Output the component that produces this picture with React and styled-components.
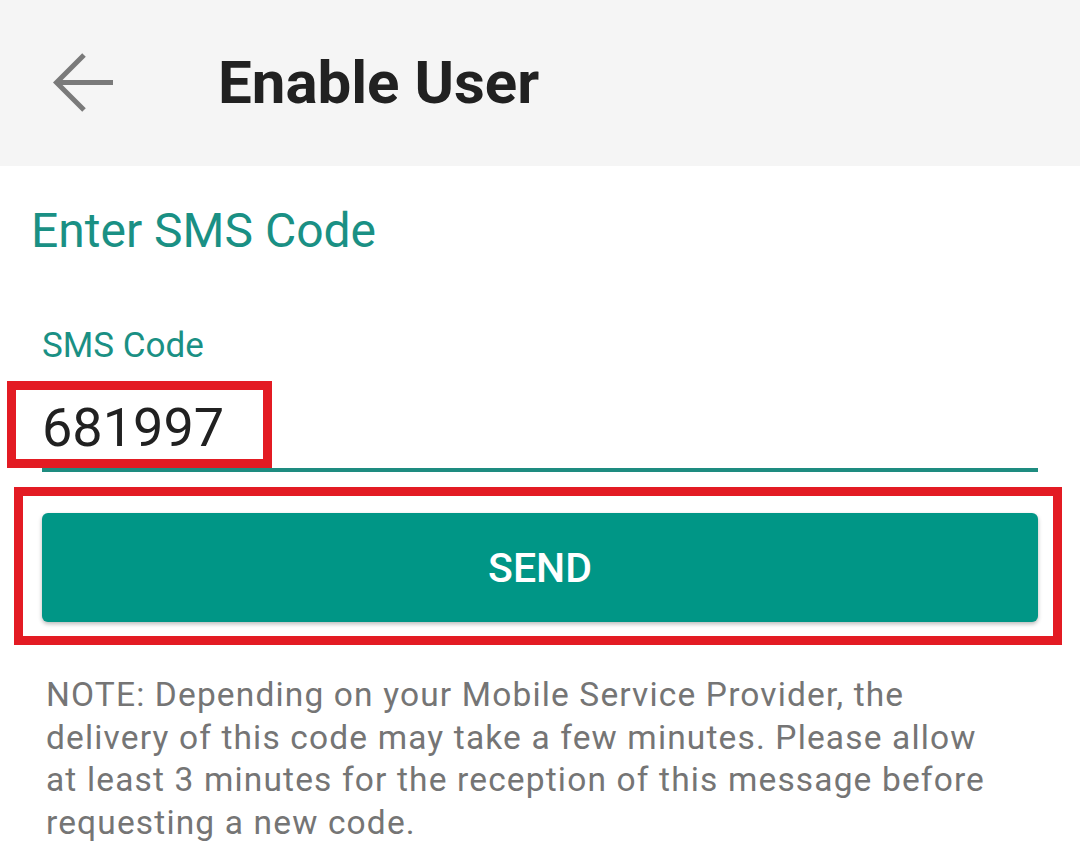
import React from "react";
import styled, { createGlobalStyle } from "styled-components";

const GlobalStyle = createGlobalStyle`
	html, body {
		margin: 0;
		padding: 0;
		background: #ffffff;
	}
	body {
		font-family: Roboto, "Noto Sans", Arial, sans-serif;
	}
`;

function BackArrow() {
	return (
		<svg width="62" height="60" viewBox="0 0 62 60" fill="none">
			<path
				d="M4 29.5H60M31 2L3.5 29.5L31 57"
				stroke="#7a7a7a"
				strokeWidth="5"
				strokeLinecap="butt"
				strokeLinejoin="miter"
			/>
		</svg>
	);
}

function App() {
	return (
		<StyledPage>
			<GlobalStyle />
			<Header>
				<BackButton aria-label="Back">
					<BackArrow />
				</BackButton>
				<Title>Enable User</Title>
			</Header>

			<Content>
				<Heading>Enter SMS Code</Heading>

				<Field>
					<FieldLabel>SMS Code</FieldLabel>
					<InputRow>
						<InputValue>681997</InputValue>
						<Highlight $top={-20} $left={-35} $bottom={0} $width={265} />
					</InputRow>
				</Field>

				<ButtonWrap>
					<SendButton>SEND</SendButton>
					<Highlight $top={-26} $left={-28} $bottom={-23} $right={-24} />
				</ButtonWrap>

				<Note>
					NOTE: Depending on your Mobile Service Provider, the delivery of
					this code may take a few minutes. Please allow at least 3 minutes
					for the reception of this message before requesting a new code.
				</Note>
			</Content>
		</StyledPage>
	);
}

const StyledPage = styled.div`
	width: 1080px;
	height: 864px;
	overflow: hidden;
	background: #ffffff;
`;

const Header = styled.header`
	height: 166px;
	display: flex;
	align-items: center;
	background-color: #f5f5f5;
`;

const BackButton = styled.button`
	display: flex;
	align-items: center;
	justify-content: center;
	margin-left: 53px;
	padding: 0;
	border: none;
	background: none;
	cursor: pointer;
`;

const Title = styled.h1`
	margin: 0 0 0 103px;
	font-size: 60px;
	line-height: 60px;
	font-weight: 700;
	color: #212121;
`;

const Content = styled.main`
	display: flex;
	flex-direction: column;
	padding: 0 42px;
`;

const Heading = styled.h2`
	margin: 40px 0 0 -11px;
	font-size: 48px;
	line-height: 50px;
	font-weight: 400;
	color: #1a9084;
`;

const Field = styled.div`
	display: flex;
	flex-direction: column;
	margin-top: 72px;
`;

const FieldLabel = styled.label`
	font-size: 35px;
	line-height: 35px;
	color: #1a9084;
`;

const InputRow = styled.div`
	position: relative;
	margin-top: 38px;
	padding-bottom: 13px;
	border-bottom: 4px solid #1e8c80;
`;

const InputValue = styled.div`
	font-size: 54px;
	line-height: 54px;
	color: #212121;
`;

const Highlight = styled.div`
	position: absolute;
	top: ${(p) => p.$top}px;
	left: ${(p) => p.$left}px;
	bottom: ${(p) => p.$bottom}px;
	${(p) => (p.$width ? `width: ${p.$width}px;` : "")}
	${(p) => (p.$right !== undefined ? `right: ${p.$right}px;` : "")}
	box-sizing: border-box;
	border: 9px solid #e31b23;
	pointer-events: none;
`;

const ButtonWrap = styled.div`
	position: relative;
	margin-top: 41px;
`;

const SendButton = styled.button`
	display: flex;
	align-items: center;
	justify-content: center;
	width: 100%;
	height: 109px;
	border: none;
	border-radius: 6px;
	background-color: #009686;
	box-shadow: 0 2px 4px rgba(0, 0, 0, 0.28);
	color: #ffffff;
	font-family: Roboto, "Noto Sans", Arial, sans-serif;
	font-size: 41px;
	font-weight: 500;
	cursor: pointer;
`;

const Note = styled.p`
	margin: 52px 33px 0 4px;
	font-size: 33.5px;
	line-height: 42.5px;
	letter-spacing: 1.15px;
	color: #757575;
`;

export default App;
